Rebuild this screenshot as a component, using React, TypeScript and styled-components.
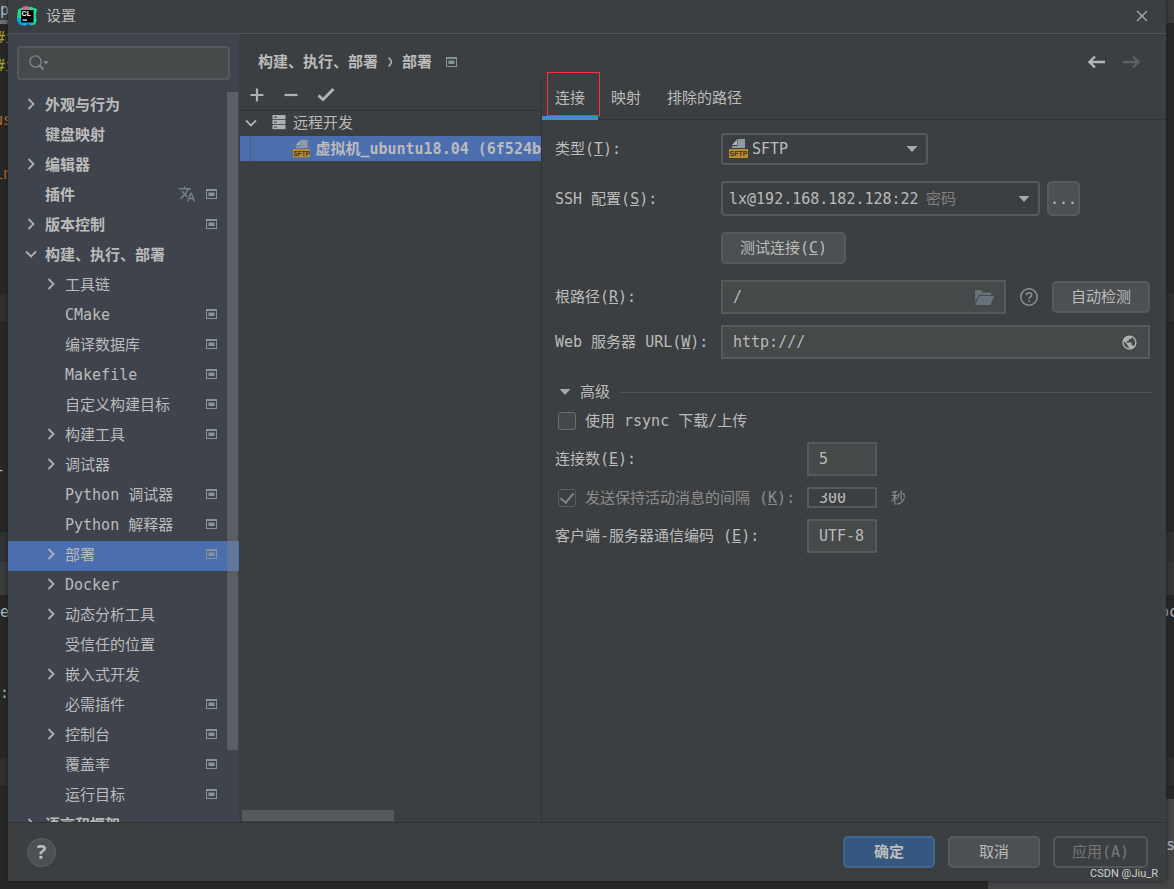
import React from "react";
import styled, { createGlobalStyle, css } from "styled-components";
import { MdPublic, MdTranslate } from "react-icons/md";

const c = {
  panel: "#3c3f41",
  side: "#3f434c",
  field: "#45494a",
  border: "#575a5b",
  line: "#323232",
  text: "#bbbbbb",
  dim: "#8c8c8c",
  select: "#4b6eaf",
  icon: "#afb1b3",
  editor: "#272727",
};

const GlobalStyle = createGlobalStyle`
  * { box-sizing: border-box; }
  body { margin: 0; background: ${c.editor}; }
  body, button, input, select {
    font-family: "DejaVu Sans Mono", "Noto Sans CJK SC", monospace;
    font-size: 15px;
    line-height: 20px;
    color: ${c.text};
  }
`;

/* ---------- page and editor behind the dialog ---------- */

const Page = styled.div`
  display: flex;
  flex-direction: column;
  height: 100vh;
  overflow: hidden;
`;

const Stage = styled.div`
  display: grid;
  grid-template-columns: 8px minmax(0, 1fr) 8px;
  flex: 1;
  min-height: 0;
`;

const Gutter = styled.div`
  overflow: hidden;
  display: flex;
  flex-direction: column;
`;

const Band = styled.div<{ $h?: number; $bg?: string; $fg?: string; $indent?: number }>`
  display: flex;
  align-items: center;
  flex: ${(p) => (p.$h ? `0 0 ${p.$h}px` : "1")};
  background: ${(p) => p.$bg ?? c.editor};
  color: ${(p) => p.$fg ?? "#a9b7c6"};
  text-indent: ${(p) => p.$indent ?? 0}px;
  white-space: pre;
`;

const BottomEdge = styled.div`
  display: flex;
  height: 8px;
`;

const StatusPiece = styled.div`
  width: 186px;
  background: #454648;
`;

/* ---------- dialog frame ---------- */

const Dialog = styled.main`
  position: relative;
  display: flex;
  flex-direction: column;
  min-width: 0;
  min-height: 0;
  background: ${c.panel};
  box-shadow: 0 0 4px #1c1c1c;
`;

const TitleBar = styled.header`
  display: flex;
  align-items: center;
  gap: 9px;
  height: 34px;
  padding: 0 18px 2px 9px;
  border-bottom: 1px solid #505354;
`;

const Title = styled.h1`
  flex: 1;
  margin: 0;
  font-size: 15px;
  font-weight: 400;
`;

const IconButton = styled.button`
  display: flex;
  padding: 0;
  border: 0;
  background: none;
  color: ${c.icon};
`;

const Body = styled.div`
  display: flex;
  flex: 1;
  min-height: 0;
`;

/* ---------- settings tree ---------- */

const Sidebar = styled.nav`
  display: flex;
  flex-direction: column;
  width: 231px;
  background: ${c.side};
`;

const SearchBox = styled.div`
  display: flex;
  align-items: center;
  height: 34px;
  margin: 12px 9px 11px;
  padding: 0 10px;
  border: 2px solid #56595c;
  border-radius: 4px;
  background: ${c.field};
`;

const SearchInput = styled.input`
  flex: 1;
  min-width: 0;
  border: 0;
  outline: 0;
  background: none;
`;

const TreeArea = styled.div`
  position: relative;
  flex: 1;
  min-height: 0;
  overflow: hidden;
`;

const TreeList = styled.ul`
  margin: 0;
  padding: 0;
  list-style: none;
`;

const TreeRow = styled.li<{ $level: number; $selected?: boolean }>`
  display: flex;
  align-items: center;
  height: 30px;
  padding: 0 22px 4px ${(p) => (p.$level ? 37 : 17)}px;
  font-weight: ${(p) => (p.$level ? 400 : 700)};
  background: ${(p) => (p.$selected ? c.select : "none")};
`;

const ArrowSlot = styled.span`
  display: flex;
  width: 20px;
`;

const RowText = styled.span`
  flex: 1;
  padding-top: 1px;
  white-space: pre;
`;

const RowIcons = styled.span`
  display: flex;
  align-items: center;
  gap: 10px;
  color: #78818b;
`;

const VScroll = styled.div`
  position: absolute;
  top: 1px;
  right: 1px;
  width: 11px;
  height: 90%;
  background: rgba(128, 128, 134, 0.45);
`;

/* ---------- content ---------- */

const Content = styled.section`
  display: flex;
  flex: 1;
  flex-direction: column;
  min-width: 0;
`;

const ContentHeader = styled.div`
  display: flex;
  align-items: center;
  justify-content: space-between;
  height: 46px;
  padding: 10px 25px 0 19px;
`;

const Crumbs = styled.div`
  display: flex;
  align-items: center;
  gap: 9px;
  font-weight: 700;
`;

const CrumbIcon = styled.span`
  display: flex;
  padding-left: 5px;
`;

const History = styled.div`
  display: flex;
  gap: 17px;
`;

const Columns = styled.div`
  display: flex;
  flex: 1;
  min-height: 0;
`;

const ServerPane = styled.div`
  display: flex;
  flex-direction: column;
  width: 303px;
  padding-left: 1px;
  border-right: 1px solid ${c.line};
`;

const Toolbar = styled.div`
  display: flex;
  align-items: center;
  gap: 18px;
  height: 31px;
  padding-left: 9px;
  border-bottom: 1px solid ${c.line};
`;

const ServerRow = styled.div<{ $child?: boolean }>`
  display: flex;
  align-items: center;
  gap: 5px;
  height: 25px;
  padding: 0 0 2px 5px;
  overflow: hidden;
  white-space: pre;
  ${(p) =>
    p.$child &&
    css`
      padding-bottom: 0;
      font-weight: 700;
      background: ${c.select};
    `}
`;

const Guide = styled.span`
  align-self: stretch;
  width: 1px;
  margin: 0 37px 0 5px;
  background: #535d70;
`;

const ServerIcon = styled.span`
  display: flex;
  padding: 0 2px 0 10px;
`;

const HScroll = styled.div`
  width: 152px;
  height: 11px;
  margin: auto 0 1px 2px;
  background: #58595b;
`;

const FormPane = styled.div`
  display: flex;
  flex: 1;
  flex-direction: column;
  min-width: 0;
`;

const TabBar = styled.div`
  position: relative;
  display: flex;
  height: 40px;
  border-bottom: 1px solid ${c.line};
`;

const Tab = styled.button<{ $active?: boolean }>`
  height: 40px;
  padding: 0 13px;
  border: 0;
  border-bottom: 4px solid ${(p) => (p.$active ? "#4a88c7" : "transparent")};
  background: none;
`;

const Highlight = styled.span`
  position: absolute;
  top: -8px;
  left: 5px;
  width: 53px;
  height: 44px;
  border: 1px solid #f5373a;
  pointer-events: none;
`;

const Form = styled.form`
  display: flex;
  flex-direction: column;
  padding: 13px 16px 0 13px;
`;

const Field = styled.div<{ $wide?: boolean; $gap: number }>`
  display: grid;
  grid-template-columns: ${(p) => (p.$wide ? 252 : 166)}px minmax(0, 1fr);
  align-items: center;
  margin-bottom: ${(p) => p.$gap}px;
`;

const Controls = styled.div`
  display: flex;
  align-items: center;
`;

const Label = styled.label<{ $dim?: boolean }>`
  white-space: pre;
  color: ${(p) => (p.$dim ? c.dim : c.text)};
`;

const Unit = styled.span`
  padding-left: 14px;
  color: ${c.dim};
`;

const Stack = styled.div<{ $w: number }>`
  display: grid;
  align-items: center;
  width: ${(p) => p.$w}px;
  > * {
    grid-area: 1 / 1;
  }
`;

const Select = styled.select<{ $h: number; $pad: number }>`
  width: 100%;
  height: ${(p) => p.$h}px;
  padding: 0 24px 0 ${(p) => p.$pad}px;
  appearance: none;
  border: 2px solid ${c.border};
  border-radius: 4px;
  background: ${c.panel};
`;

const SelectHint = styled.span`
  padding-left: 205px;
  color: #808080;
  pointer-events: none;
`;

const SelectIcon = styled.span`
  display: flex;
  padding-left: 8px;
  pointer-events: none;
`;

const SelectArrow = styled.span`
  display: flex;
  justify-self: end;
  padding-right: 10px;
  pointer-events: none;
`;

const Button = styled.button<{ $w: number; $primary?: boolean }>`
  width: ${(p) => p.$w}px;
  height: 32px;
  padding: 0;
  border: 2px solid ${(p) => (p.$primary ? "#40658f" : "#585b5d")};
  border-radius: 5px;
  background: ${(p) => (p.$primary ? "#365880" : "#4c5052")};
  font-weight: ${(p) => (p.$primary ? 700 : 400)};
  white-space: nowrap;
  &:disabled {
    border-color: #54585a;
    background: none;
    color: #777777;
  }
`;

const MoreButton = styled(Button)`
  height: 35px;
  margin-left: 7px;
`;

const TextField = styled.div<{ $w?: number }>`
  display: flex;
  align-items: center;
  flex: ${(p) => (p.$w ? "none" : "1")};
  width: ${(p) => (p.$w ? `${p.$w}px` : "auto")};
  min-width: 0;
  height: 34px;
  padding: 0 10px;
  border: 2px solid ${c.border};
  background: ${c.field};
`;

const ShortField = styled(TextField)`
  height: 21px;
  background: ${c.panel};
`;

const Input = styled.input<{ $clipped?: boolean }>`
  flex: 1;
  min-width: 0;
  height: ${(p) => (p.$clipped ? 10 : 24)}px;
  padding: 0;
  border: 0;
  outline: 0;
  overflow: hidden;
  background: none;
  color: ${c.text};
`;

const HelpSlot = styled.span`
  display: flex;
  padding: 0 14px;
`;

const SectionHead = styled.div`
  display: flex;
  align-items: center;
  gap: 9px;
  height: 20px;
  margin: 23px -3px 9px 4px;
  &::after {
    content: "";
    flex: 1;
    height: 1px;
    background: #515456;
  }
`;

const CheckRow = styled.div`
  display: flex;
  align-items: center;
  gap: 9px;
`;

const RsyncRow = styled(CheckRow)`
  margin-bottom: 11px;
`;

const CheckBox = styled.input`
  display: grid;
  place-items: center;
  width: 18px;
  height: 18px;
  margin: 0 0 0 3px;
  appearance: none;
  border: 1px solid #6b6e70;
  border-radius: 3px;
  background: #43494a;
  &:disabled {
    border-color: #5a5d5f;
    background: ${c.panel};
  }
  &:checked::after {
    content: "";
    width: 6px;
    height: 11px;
    border: solid #818385;
    border-width: 0 2px 2px 0;
    transform: translateY(-1px) rotate(40deg);
  }
`;

/* ---------- footer ---------- */

const Footer = styled.footer`
  display: flex;
  align-items: center;
  gap: 13px;
  height: 59px;
  padding: 0 18px 0 19px;
  border-top: 1px solid ${c.line};
`;

const HelpButton = styled.button`
  width: 29px;
  height: 29px;
  margin-right: auto;
  padding: 0;
  border: 1px solid #5e6264;
  border-radius: 50%;
  background: #4c5052;
  font-family: "Open Sans", sans-serif;
  font-size: 20px;
  font-weight: 700;
  line-height: 20px;
`;

const Watermark = styled.span`
  position: absolute;
  right: 8px;
  bottom: 0;
  font-family: Roboto, sans-serif;
  font-size: 11px;
  line-height: 14px;
  color: #d0d0d0;
`;

/* ---------- drawings ---------- */

const Chevron = ({ open }: { open?: boolean }) => (
  <svg width="12" height="12" viewBox="0 0 12 12" fill="none" stroke={c.icon} strokeWidth="1.8">
    <path d={open ? "M1 3.5l5 5 5-5" : "M3.5 1l5 5-5 5"} />
  </svg>
);

const Triangle = () => (
  <svg width="12" height="8" viewBox="0 0 12 8" fill="#a5a7a9">
    <path d="M.5 1h11L6 7z" />
  </svg>
);

const ProjectIcon = () => (
  <svg width="11" height="10" viewBox="0 0 11 10" fill="none">
    <rect x=".5" y=".5" width="10" height="9" stroke="#87939a" />
    <path d="M0 0h11v2H0z" fill="#87939a" />
    <rect x="2.5" y="3.5" width="6" height="3.5" fill="#87939a" />
  </svg>
);

const SearchGlyph = () => (
  <svg width="20" height="16" viewBox="0 0 20 16" fill="none">
    <circle cx="6.5" cy="6.5" r="5.6" stroke="#7c868c" strokeWidth="1.4" />
    <path d="M10.5 10.5l4 4" stroke="#7c868c" strokeWidth="2" />
    <path d="M14 6h6l-3 3.4z" fill="#7c868c" />
  </svg>
);

const Logo = () => (
  <svg width="20" height="20" viewBox="0 0 20 20">
    <path d="M1 3.5L7 .8l4 2.2-2 12L3 17 0 12z" fill="#21d789" />
    <path d="M10 2l3.5-1.2L20 3l-1.2 6 .8 6-2.2 4.2L10 15z" fill="#1fe09a" />
    <path d="M0 11l5 3 5 2 2 2-4 2-5.5-1.5L0 15z" fill="#00a8e8" />
    <path d="M7 .5L11 0l1 3.5H5z" fill="#ff4f9a" />
    <path d="M11 16h5v3l-3 .5z" fill="#0fb6d8" />
    <path d="M4 4h12.5v12.5H4z" fill="#000" />
    <text x="4.6" y="10" fontFamily="Liberation Sans" fontSize="7" fontWeight="700" fill="#fff">
      CL
    </text>
    <path d="M5.5 13.5H10v1.2H5.5z" fill="#fff" />
  </svg>
);

const SftpIcon = () => (
  <svg width="19" height="20" viewBox="0 0 19 20">
    <path d="M8.5 0H16v9H8.5z" fill="#8f9ba3" />
    <path d="M3 7h6v2H3z" fill="#8f9ba3" />
    <path d="M3 6h5V.6z" fill="#aab5bd" />
    <path d="M0 10h19v9H0z" fill="#b98a31" />
    <text
      x="9.5"
      y="17.2"
      textAnchor="middle"
      fontFamily="Liberation Sans"
      fontSize="7"
      fontWeight="700"
      fill="#3d3320"
    >
      SFTP
    </text>
  </svg>
);

const ServersIcon = () => (
  <svg width="14" height="15" viewBox="0 0 14 15">
    {[0, 5, 10].map((y) => (
      <g key={y}>
        <rect y={y} x=".5" width="13" height="4.2" fill={c.icon} />
        <rect y={y + 1.6} x="2" width="3" height="1" fill={c.panel} />
      </g>
    ))}
  </svg>
);

const PlusIcon = () => (
  <svg width="16" height="16" viewBox="0 0 16 16" stroke={c.icon} strokeWidth="2.2">
    <path d="M8 1.5v13M1.5 8h13" />
  </svg>
);

const MinusIcon = () => (
  <svg width="16" height="16" viewBox="0 0 16 16" stroke={c.icon} strokeWidth="2.2">
    <path d="M1.5 8h13" />
  </svg>
);

const CheckIcon = () => (
  <svg width="18" height="16" viewBox="0 0 18 16" fill="none" stroke={c.icon} strokeWidth="3">
    <path d="M1.5 8.5l4.5 4L16.5 2" />
  </svg>
);

const ArrowIcon = ({ forward }: { forward?: boolean }) => (
  <svg
    width="18"
    height="14"
    viewBox="0 0 18 14"
    fill="none"
    stroke={forward ? "#5d6061" : "#b4b6b8"}
    strokeWidth="2.4"
  >
    <path d={forward ? "M0 7h16M10 1.5L15.5 7 10 12.5" : "M17 7H2M7 1.5L1.500 7 7 12.5"} />
  </svg>
);

const CloseIcon = () => (
  <svg width="12" height="12" viewBox="0 0 12 12" stroke="#b4b6b8" strokeWidth="1.1">
    <path d="M1 1l10 10M11 1L1 11" />
  </svg>
);

const FolderIcon = () => (
  <svg width="19" height="15" viewBox="0 0 19 15" fill="#66727a">
    <path d="M0 0h6l2 2.5h8V5H4L0 12z" />
    <path d="M4.5 6H19l-3.5 9H0z" />
  </svg>
);

const HelpIcon = () => (
  <svg width="18" height="18" viewBox="0 0 18 18" fill="none" stroke="#87939a" strokeWidth="1.5">
    <circle cx="9" cy="9" r="8.2" />
    <path d="M6.5 7.2c0-3.4 5.2-3.2 5.2-.2 0 1.8-2.6 1.9-2.6 4" />
    <path d="M9.1 12.2V14" />
  </svg>
);

/* ---------- data ---------- */

type Item = {
  text: string;
  level: 0 | 1;
  arrow?: "open" | "closed";
  project?: boolean;
  translate?: boolean;
  selected?: boolean;
};

const items: Item[] = [
  { text: "外观与行为", level: 0, arrow: "closed" },
  { text: "键盘映射", level: 0 },
  { text: "编辑器", level: 0, arrow: "closed" },
  { text: "插件", level: 0, project: true, translate: true },
  { text: "版本控制", level: 0, arrow: "closed", project: true },
  { text: "构建、执行、部署", level: 0, arrow: "open" },
  { text: "工具链", level: 1, arrow: "closed" },
  { text: "CMake", level: 1, project: true },
  { text: "编译数据库", level: 1, project: true },
  { text: "Makefile", level: 1, project: true },
  { text: "自定义构建目标", level: 1, project: true },
  { text: "构建工具", level: 1, arrow: "closed", project: true },
  { text: "调试器", level: 1, arrow: "closed" },
  { text: "Python 调试器", level: 1, project: true },
  { text: "Python 解释器", level: 1, project: true },
  { text: "部署", level: 1, arrow: "closed", project: true, selected: true },
  { text: "Docker", level: 1, arrow: "closed" },
  { text: "动态分析工具", level: 1, arrow: "closed" },
  { text: "受信任的位置", level: 1 },
  { text: "嵌入式开发", level: 1, arrow: "closed" },
  { text: "必需插件", level: 1, project: true },
  { text: "控制台", level: 1, arrow: "closed", project: true },
  { text: "覆盖率", level: 1, project: true },
  { text: "运行目标", level: 1, project: true },
  { text: "语言和框架", level: 0, arrow: "closed" },
];

const LeftEditor = () => (
  <Gutter aria-hidden="true">
    <Band $h={20} $bg="#3c3f41">p</Band>
    <Band $h={4} $bg="#6e7175" />
    <Band $h={28} $fg="#a5a02a" $indent={-4}>#i</Band>
    <Band $h={27} $fg="#a5a02a" $indent={-4}>#i</Band>
    <Band $h={27} />
    <Band $h={27} $fg="#b86a2e" $indent={-6}>us</Band>
    <Band $h={27} />
    <Band $h={27} $fg="#b86a2e" $indent={-6}>in</Band>
    <Band $h={107} />
    <Band $h={27} $bg="#2f2f2f" />
    <Band $h={135} />
    <Band $h={27} $indent={-4}>-</Band>
    <Band $h={49} />
    <Band $h={30} $bg="#303132" />
    <Band $h={33} $bg="#393b3d" />
    <Band $h={3} />
    <Band $h={27}>e</Band>
    <Band $h={54} />
    <Band $h={27}>:</Band>
    <Band $h={52} />
    <Band $h={27} $bg="#2f2f2f" />
    <Band />
  </Gutter>
);

const RightEditor = () => (
  <Gutter aria-hidden="true">
    <Band $h={23} $bg="#3a3c3e" />
    <Band $h={271} />
    <Band $h={27} $bg="#2f2f2f" />
    <Band $h={211} />
    <Band $h={30} $bg="#303132" />
    <Band $h={33} $bg="#353638" />
    <Band $h={3} />
    <Band $h={27} $indent={-6}>oc</Band>
    <Band $h={133} />
    <Band $h={27} $bg="#2f2f2f" />
    <Band $h={14} />
    <Band $h={32} $bg="#454648" />
    <Band $h={27} $bg="#454648">s</Band>
    <Band $bg="#454648" />
  </Gutter>
);

export default function App() {
  return (
    <Page>
      <GlobalStyle />
      <Stage>
        <LeftEditor />
        <Dialog>
          <TitleBar>
            <Logo />
            <Title>设置</Title>
            <IconButton aria-label="关闭">
              <CloseIcon />
            </IconButton>
          </TitleBar>

          <Body>
            <Sidebar>
              <SearchBox>
                <SearchGlyph />
                <SearchInput type="text" aria-label="搜索" />
              </SearchBox>
              <TreeArea>
                <TreeList>
                  {items.map((it) => (
                    <TreeRow key={it.text} $level={it.level} $selected={it.selected}>
                      <ArrowSlot>{it.arrow && <Chevron open={it.arrow === "open"} />}</ArrowSlot>
                      <RowText>{it.text}</RowText>
                      <RowIcons>
                        {it.translate && <MdTranslate size={18} />}
                        {it.project && <ProjectIcon />}
                      </RowIcons>
                    </TreeRow>
                  ))}
                </TreeList>
                <VScroll />
              </TreeArea>
            </Sidebar>

            <Content>
              <ContentHeader>
                <Crumbs>
                  <span>构建、执行、部署</span>
                  <svg width="6" height="10" viewBox="0 0 6 10" fill="none" stroke={c.icon} strokeWidth="1.5">
                    <path d="M1.5 .5q3 3 3 4.5t-3 4.5" />
                  </svg>
                  <span>部署</span>
                  <CrumbIcon>
                    <ProjectIcon />
                  </CrumbIcon>
                </Crumbs>
                <History>
                  <IconButton aria-label="后退">
                    <ArrowIcon />
                  </IconButton>
                  <IconButton aria-label="前进" disabled>
                    <ArrowIcon forward />
                  </IconButton>
                </History>
              </ContentHeader>

              <Columns>
                <ServerPane>
                  <Toolbar>
                    <IconButton aria-label="添加">
                      <PlusIcon />
                    </IconButton>
                    <IconButton aria-label="移除">
                      <MinusIcon />
                    </IconButton>
                    <IconButton aria-label="设为默认">
                      <CheckIcon />
                    </IconButton>
                  </Toolbar>
                  <ServerRow>
                    <Chevron open />
                    <ServerIcon>
                      <ServersIcon />
                    </ServerIcon>
                    <span>远程开发</span>
                  </ServerRow>
                  <ServerRow $child>
                    <Guide />
                    <SftpIcon />
                    <span>虚拟机_ubuntu18.04 (6f524b</span>
                  </ServerRow>
                  <HScroll />
                </ServerPane>

                <FormPane>
                  <TabBar role="tablist">
                    <Tab role="tab" aria-selected="true" $active>
                      连接
                    </Tab>
                    <Tab role="tab">映射</Tab>
                    <Tab role="tab">排除的路径</Tab>
                    <Highlight />
                  </TabBar>

                  <Form onSubmit={(e: React.FormEvent) => e.preventDefault()}>
                    <Field $gap={16}>
                      <Label htmlFor="type">
                        类型(<u>T</u>):
                      </Label>
                      <Stack $w={207}>
                        <Select id="type" $h={32} $pad={29}>
                          <option>SFTP</option>
                        </Select>
                        <SelectIcon>
                          <SftpIcon />
                        </SelectIcon>
                        <SelectArrow>
                          <Triangle />
                        </SelectArrow>
                      </Stack>
                    </Field>

                    <Field $gap={16}>
                      <Label htmlFor="ssh">
                        SSH 配置(<u>S</u>):
                      </Label>
                      <Controls>
                        <Stack $w={319}>
                          <Select id="ssh" $h={35} $pad={6}>
                            <option>lx@192.168.182.128:22</option>
                          </Select>
                          <SelectHint>密码</SelectHint>
                          <SelectArrow>
                            <Triangle />
                          </SelectArrow>
                        </Stack>
                        <MoreButton type="button" $w={33} aria-label="浏览 SSH 配置">
                          ...
                        </MoreButton>
                      </Controls>
                    </Field>

                    <Field $gap={16}>
                      <span />
                      <Button type="button" $w={125}>
                        测试连接(<u>C</u>)
                      </Button>
                    </Field>

                    <Field $gap={11}>
                      <Label htmlFor="root">
                        根路径(<u>R</u>):
                      </Label>
                      <Controls>
                        <TextField>
                          <Input id="root" type="text" defaultValue="/" />
                          <FolderIcon />
                        </TextField>
                        <HelpSlot>
                          <HelpIcon />
                        </HelpSlot>
                        <Button type="button" $w={98}>
                          自动检测
                        </Button>
                      </Controls>
                    </Field>

                    <Field $gap={0}>
                      <Label htmlFor="url">
                        Web 服务器 URL(<u>W</u>):
                      </Label>
                      <TextField>
                        <Input id="url" type="text" defaultValue="http:///" />
                        <MdPublic size={17} color={c.icon} />
                      </TextField>
                    </Field>

                    <SectionHead>
                      <Triangle />
                      <span>高级</span>
                    </SectionHead>

                    <RsyncRow>
                      <CheckBox id="rsync" type="checkbox" />
                      <Label htmlFor="rsync">使用 rsync 下载/上传</Label>
                    </RsyncRow>

                    <Field $wide $gap={11}>
                      <Label htmlFor="count">
                        连接数(<u>E</u>):
                      </Label>
                      <TextField $w={70}>
                        <Input id="count" type="text" defaultValue="5" />
                      </TextField>
                    </Field>

                    <Field $wide $gap={11}>
                      <CheckRow>
                        <CheckBox id="alive" type="checkbox" defaultChecked disabled />
                        <Label htmlFor="alive" $dim>
                          发送保持活动消息的间隔 (<u>K</u>):
                        </Label>
                      </CheckRow>
                      <Controls>
                        <ShortField $w={70}>
                          <Input type="text" aria-label="间隔" defaultValue="300" disabled $clipped />
                        </ShortField>
                        <Unit>秒</Unit>
                      </Controls>
                    </Field>

                    <Field $wide $gap={0}>
                      <Label htmlFor="encoding">
                        客户端-服务器通信编码 (<u>E</u>):
                      </Label>
                      <TextField $w={70}>
                        <Input id="encoding" type="text" defaultValue="UTF-8" />
                      </TextField>
                    </Field>
                  </Form>
                </FormPane>
              </Columns>
            </Content>
          </Body>

          <Footer>
            <HelpButton aria-label="帮助">?</HelpButton>
            <Button $w={92} $primary>
              确定
            </Button>
            <Button $w={92}>取消</Button>
            <Button $w={95} disabled>
              应用(A)
            </Button>
          </Footer>
          <Watermark>CSDN @Jiu_R</Watermark>
        </Dialog>
        <RightEditor />
      </Stage>
      <BottomEdge>
        <Band />
        <StatusPiece />
      </BottomEdge>
    </Page>
  );
}
